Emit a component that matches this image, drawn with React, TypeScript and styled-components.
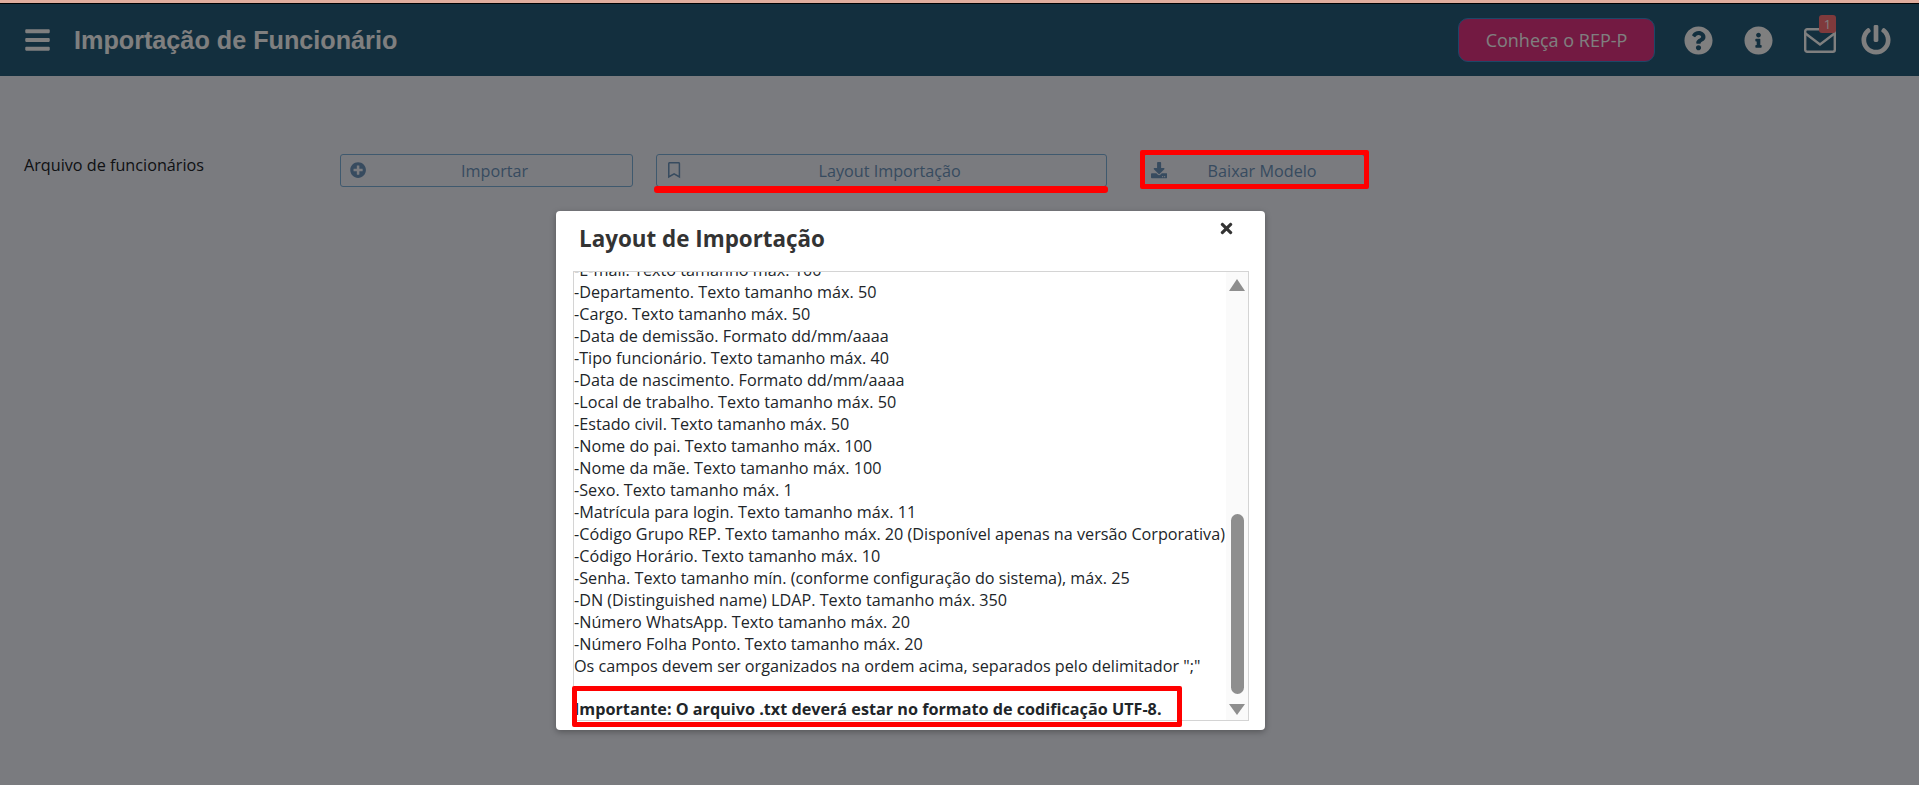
import { createGlobalStyle, styled } from "styled-components";
import {
  FaBars,
  FaDownload,
  FaInfoCircle,
  FaPlusCircle,
  FaPowerOff,
  FaQuestionCircle,
  FaRegBookmark,
  FaTimes,
} from "react-icons/fa";

const GlobalStyle = createGlobalStyle`
  html, body {
    margin: 0;
    height: 100%;
    overflow: hidden;
  }
  body {
    font-family: "Open Sans", "Liberation Sans", sans-serif;
    background: #f5f6ff;
  }
`;

const TopStrip = styled.div`
  height: 3px;
  background: #e0ad9d;
`;

const Page = styled.div`
  position: relative;
  height: calc(100vh - 3px);
  overflow: hidden;
  background: #f5f6ff;
`;

const Header = styled.header`
  height: 72px;
  border-top: 1px solid #000;
  background: #275e7c;
  display: flex;
  align-items: center;
  padding: 0 28px 0 25px;
  color: #fff;
`;

const MenuButton = styled.div`
  display: flex;
  font-size: 28px;
  margin-right: 24px;
  width: 25px;
  justify-content: center;
`;

const Title = styled.h1`
  margin: 0;
  flex: 1;
  font: bold 25.2px "Liberation Sans", Arial, sans-serif;
`;

const PromoButton = styled.div`
  width: 197px;
  height: 44px;
  box-sizing: border-box;
  border: 1px solid #3a8fd0;
  border-radius: 10px;
  background: #e63484;
  display: flex;
  align-items: center;
  justify-content: center;
  font-size: 18px;
  margin-right: 29px;
`;

const HeaderIcons = styled.div`
  display: flex;
  align-items: center;
`;

const IconSlot = styled.div<{ $width: number; $gap?: number }>`
  position: relative;
  display: flex;
  width: ${(props) => props.$width}px;
  margin-left: ${(props) => props.$gap ?? 0}px;
  justify-content: center;
  font-size: ${(props) => props.$width}px;
`;

const Badge = styled.span`
  position: absolute;
  top: -13px;
  right: 0;
  width: 17px;
  height: 18px;
  border-radius: 3px;
  background: #ff7478;
  font-size: 13px;
  line-height: 18px;
  text-align: center;
`;

const Content = styled.main`
  display: flex;
  align-items: flex-start;
  padding: 78px 0 0 24px;
`;

const FieldLabel = styled.div`
  width: 316px;
  font-size: 16.2px;
  line-height: 22px;
  color: #212529;
`;

const ActionButton = styled.div<{ $width: number; $gap: number; $pad: number }>`
  width: ${(props) => props.$width}px;
  margin-right: ${(props) => props.$gap}px;
  height: 33px;
  box-sizing: border-box;
  border: 1px solid #7fb2dc;
  border-radius: 3px;
  display: flex;
  align-items: center;
  padding: 0 ${(props) => props.$pad}px;
  color: #6f97bf;
  font-size: 16.2px;
`;

const ButtonLabel = styled.span`
  flex: 1;
  text-align: center;
`;

const Overlay = styled.div`
  position: absolute;
  inset: 0;
  background: rgba(0, 0, 0, 0.5);
  padding: 208px 0 0 556px;
`;

const Modal = styled.section`
  position: relative;
  width: 709px;
  height: 519px;
  box-sizing: border-box;
  padding: 0 16px 9px 17px;
  border-radius: 4px;
  background: #fff;
  box-shadow: 0 2px 6px rgba(0, 0, 0, 0.3);
  display: flex;
  flex-direction: column;
`;

const ModalHead = styled.div`
  height: 60px;
  flex: none;
  display: flex;
  justify-content: space-between;
  padding: 13px 14px 0 6px;
  box-sizing: border-box;
`;

const ModalTitle = styled.h2`
  margin: 0;
  font-size: 22.4px;
  line-height: 30px;
  font-weight: 700;
  color: #333;
`;

const CloseIcon = styled.div`
  display: flex;
  font-size: 17px;
  height: 16px;
  margin-top: -4px;
  color: #333;
`;

const ScrollBox = styled.div`
  flex: 1;
  min-height: 0;
  display: flex;
  border: 1px solid #d4d4d4;
  overflow: hidden;
`;

const ScrollText = styled.div`
  flex: 1;
  display: flex;
  flex-direction: column;
  justify-content: flex-end;
  overflow: hidden;
  font-size: 16.2px;
  line-height: 22px;
  color: #212529;
`;

const Line = styled.div`
  flex: none;
  white-space: nowrap;
`;

const BoldLine = styled(Line)`
  margin-top: 21px;
  font-weight: 700;
`;

const ScrollTrack = styled.div`
  width: 22px;
  flex: none;
  background: #fafafa;
  display: flex;
  flex-direction: column;
  align-items: center;
  padding: 7px 0 5px;
  box-sizing: border-box;
`;

const ArrowUp = styled.div`
  width: 0;
  height: 0;
  border-left: 8px solid transparent;
  border-right: 8px solid transparent;
  border-bottom: 12px solid #8e8e8e;
`;

const ArrowDown = styled.div`
  width: 0;
  height: 0;
  border-left: 8px solid transparent;
  border-right: 8px solid transparent;
  border-top: 11px solid #8e8e8e;
  margin-top: 10px;
`;

const Thumb = styled.div`
  width: 13px;
  height: 180px;
  margin-top: auto;
  border-radius: 7px;
  background: #8e8e8e;
`;

const ImportantMark = styled.div`
  position: absolute;
  left: 16px;
  bottom: 3px;
  width: 610px;
  height: 41px;
  box-sizing: border-box;
  border: 5px solid #f00;
  border-radius: 2px;
`;

const UnderlineMark = styled.div`
  position: absolute;
  left: 654px;
  top: 183px;
  width: 454px;
  height: 7px;
  border-radius: 3px;
  background: #f00;
`;

const BoxMark = styled.div`
  position: absolute;
  left: 1140px;
  top: 147px;
  width: 229px;
  height: 39px;
  box-sizing: border-box;
  border: 5px solid #f00;
  border-radius: 2px;
`;

const EnvelopeIcon = () => (
  <svg width="32" height="25" viewBox="0 0 32 25" fill="none" stroke="currentColor" strokeWidth="2.4">
    <rect x="1.2" y="1.2" width="29.6" height="22.6" rx="2" />
    <path d="M1.5 5.5 L16 16.5 L30.5 5.5" />
  </svg>
);

const lines = [
  "-E-mail. Texto tamanho máx. 100",
  "-Departamento. Texto tamanho máx. 50",
  "-Cargo. Texto tamanho máx. 50",
  "-Data de demissão. Formato dd/mm/aaaa",
  "-Tipo funcionário. Texto tamanho máx. 40",
  "-Data de nascimento. Formato dd/mm/aaaa",
  "-Local de trabalho. Texto tamanho máx. 50",
  "-Estado civil. Texto tamanho máx. 50",
  "-Nome do pai. Texto tamanho máx. 100",
  "-Nome da mãe. Texto tamanho máx. 100",
  "-Sexo. Texto tamanho máx. 1",
  "-Matrícula para login. Texto tamanho máx. 11",
  "-Código Grupo REP. Texto tamanho máx. 20 (Disponível apenas na versão Corporativa)",
  "-Código Horário. Texto tamanho máx. 10",
  "-Senha. Texto tamanho mín. (conforme configuração do sistema), máx. 25",
  "-DN (Distinguished name) LDAP. Texto tamanho máx. 350",
  "-Número WhatsApp. Texto tamanho máx. 20",
  "-Número Folha Ponto. Texto tamanho máx. 20",
  'Os campos devem ser organizados na ordem acima, separados pelo delimitador ";"',
];

const App = () => {
  return (
    <>
      <GlobalStyle />
      <TopStrip />
      <Page>
        <Header>
          <MenuButton><FaBars /></MenuButton>
          <Title>Importação de Funcionário</Title>
          <PromoButton>Conheça o REP-P</PromoButton>
          <HeaderIcons>
            <IconSlot $width={29}><FaQuestionCircle /></IconSlot>
            <IconSlot $width={29} $gap={31}><FaInfoCircle /></IconSlot>
            <IconSlot $width={32} $gap={31}>
              <EnvelopeIcon />
              <Badge>1</Badge>
            </IconSlot>
            <IconSlot $width={30} $gap={25}><FaPowerOff /></IconSlot>
          </HeaderIcons>
        </Header>
        <Content>
          <FieldLabel>Arquivo de funcionários</FieldLabel>
          <ActionButton $width={293} $gap={23} $pad={9}>
            <FaPlusCircle />
            <ButtonLabel>Importar</ButtonLabel>
          </ActionButton>
          <ActionButton $width={451} $gap={36} $pad={9}>
            <FaRegBookmark />
            <ButtonLabel>Layout Importação</ButtonLabel>
          </ActionButton>
          <ActionButton $width={222} $gap={0} $pad={7}>
            <FaDownload />
            <ButtonLabel>Baixar Modelo</ButtonLabel>
          </ActionButton>
        </Content>
        <Overlay>
          <Modal>
            <ModalHead>
              <ModalTitle>Layout de Importação</ModalTitle>
              <CloseIcon><FaTimes /></CloseIcon>
            </ModalHead>
            <ScrollBox>
              <ScrollText>
                {lines.map((line) => (
                  <Line key={line}>{line}</Line>
                ))}
                <BoldLine>Importante: O arquivo .txt deverá estar no formato de codificação UTF-8.</BoldLine>
              </ScrollText>
              <ScrollTrack>
                <ArrowUp />
                <Thumb />
                <ArrowDown />
              </ScrollTrack>
            </ScrollBox>
            <ImportantMark />
          </Modal>
        </Overlay>
        <UnderlineMark />
        <BoxMark />
      </Page>
    </>
  );
};

export default App;
